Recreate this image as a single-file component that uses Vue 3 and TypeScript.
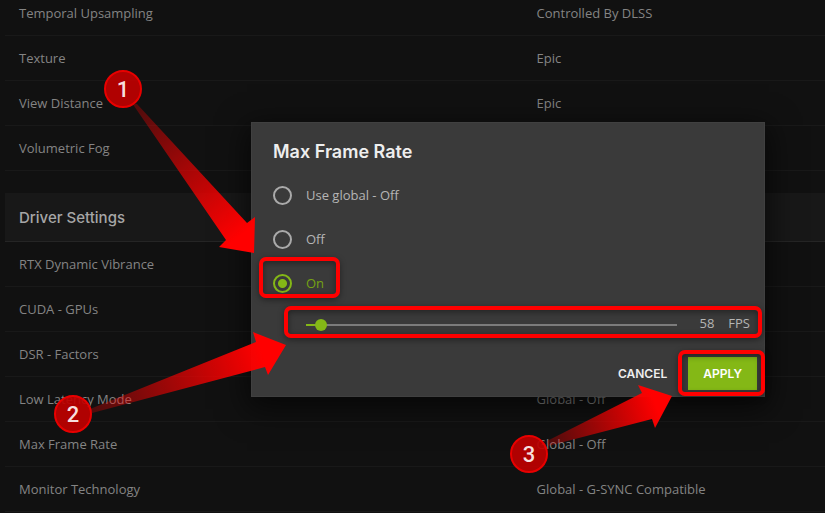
<script setup lang="ts">
import { ref } from 'vue'

interface Setting {
  name: string
  value: string
}

interface Marker {
  step: number
  x: number
  y: number
  arrow: string
  from: [number, number]
  to: [number, number]
}

const gameSettings: Setting[] = [
  { name: 'Temporal Upsampling', value: 'Controlled By DLSS' },
  { name: 'Texture', value: 'Epic' },
  { name: 'View Distance', value: 'Epic' },
  { name: 'Volumetric Fog', value: '' },
]

const driverSettings: Setting[] = [
  { name: 'RTX Dynamic Vibrance', value: '' },
  { name: 'CUDA - GPUs', value: '' },
  { name: 'DSR - Factors', value: '' },
  { name: 'Low Latency Mode', value: 'Global - Off' },
  { name: 'Max Frame Rate', value: 'Global - Off' },
  { name: 'Monitor Technology', value: 'Global - G-SYNC Compatible' },
]

const options = [
  { id: 'global', label: 'Use global - Off' },
  { id: 'off', label: 'Off' },
  { id: 'on', label: 'On' },
]

const markers: Marker[] = [
  {
    step: 1, x: 123, y: 89,
    arrow: '132,103 137,104 247,223 255,217 254,253 219,247 226,240',
    from: [134, 104], to: [240, 236],
  },
  {
    step: 2, x: 73, y: 414,
    arrow: '90,409 256,342 253,332 286,345 268,375 265,367 92,413',
    from: [90, 411], to: [262, 352],
  },
  {
    step: 3, x: 529, y: 454,
    arrow: '547,441 642,393 638,385 672,396 655,428 652,419 548,446',
    from: [547, 443], to: [655, 403],
  },
]

const mode = ref('on')
const fps = ref(58)
const min = 40
const max = 800
</script>

<template>
  <div class="page">
    <main class="settings">
      <table class="list">
        <colgroup><col class="name-col" /><col /></colgroup>
        <tbody>
          <tr v-for="s in gameSettings" :key="s.name">
            <th scope="row">{{ s.name }}</th>
            <td>{{ s.value }}</td>
          </tr>
        </tbody>
      </table>
      <h2 class="section">Driver Settings</h2>
      <table class="list">
        <colgroup><col class="name-col" /><col /></colgroup>
        <tbody>
          <tr v-for="s in driverSettings" :key="s.name">
            <th scope="row">{{ s.name }}</th>
            <td>{{ s.value }}</td>
          </tr>
        </tbody>
      </table>
    </main>

    <div class="overlay">
      <form class="dialog" role="dialog" aria-labelledby="dialog-title" @submit.prevent>
        <h1 id="dialog-title">Max Frame Rate</h1>
        <div class="options">
          <label
            v-for="o in options"
            :key="o.id"
            class="option"
            :class="{ selected: mode === o.id }"
          >
            <input v-model="mode" type="radio" name="mode" :value="o.id" />
            <span>{{ o.label }}</span>
            <i v-if="o.id === 'on'" class="highlight highlight-option"></i>
          </label>
        </div>
        <div class="slider-row">
          <input
            v-model.number="fps"
            class="slider"
            type="range"
            :min="min"
            :max="max"
            aria-label="Frames per second"
            :style="{ '--fill': ((fps - min) / (max - min)) * 100 + '%' }"
          />
          <output class="fps">{{ fps }}</output>
          <span class="unit">FPS</span>
          <i class="highlight highlight-slider"></i>
        </div>
        <div class="actions">
          <button type="button" class="cancel">CANCEL</button>
          <div class="apply-wrap">
            <button type="submit" class="apply">APPLY</button>
            <i class="highlight highlight-apply"></i>
          </div>
        </div>
      </form>
    </div>

    <svg class="markers" aria-hidden="true">
      <defs>
        <linearGradient
          v-for="m in markers"
          :id="'fade' + m.step"
          :key="m.step"
          gradientUnits="userSpaceOnUse"
          :x1="m.from[0]"
          :y1="m.from[1]"
          :x2="m.to[0]"
          :y2="m.to[1]"
        >
          <stop offset="0" stop-color="#f00" stop-opacity="0.25" />
          <stop offset="1" stop-color="#f00" />
        </linearGradient>
      </defs>
      <g v-for="m in markers" :key="m.step">
        <polygon :points="m.arrow" :fill="`url(#fade${m.step})`" />
        <circle :cx="m.x" :cy="m.y" r="18" class="dot" />
        <text :x="m.x" :y="m.y + 8" class="digit">{{ m.step }}</text>
      </g>
    </svg>
  </div>
</template>

<style>
body {
  margin: 0;
  background: #111;
}
</style>

<style scoped>
.page {
  position: relative;
  height: 100vh;
  overflow: hidden;
  background: #111;
  color: #848484;
  font: 13px/20px "Open Sans", "Liberation Sans", sans-serif;
}

.settings {
  margin: -9px 0 0 5px;
}

.list {
  width: 100%;
  border-collapse: separate;
  border-spacing: 0;
  table-layout: fixed;
}

.name-col {
  width: 63%;
}

.list th,
.list td {
  box-sizing: border-box;
  height: 45px;
  padding: 0 14px;
  border-bottom: 1px solid #191919;
  font-weight: 400;
  text-align: left;
}

.list td {
  padding-left: 15px;
}

.section {
  margin: 22px 0 0;
  padding: 15px 14px 13px;
  border-bottom: 1px solid #252525;
  background: #181818;
  color: #a6a6a6;
  font: 500 15px/20px Inter, "Liberation Sans", sans-serif;
}

.overlay {
  position: absolute;
  inset: 0;
  display: flex;
  align-items: flex-start;
  padding: 122px 60px 0 251px;
}

.dialog {
  box-sizing: border-box;
  flex: 1;
  padding: 18px 7px 6px 21px;
  border: 1px solid #404040;
  background: #3a3a3a;
  box-shadow: 0 8px 28px 4px rgba(0, 0, 0, 0.6);
  color: #b5b5b5;
}

.dialog h1 {
  margin: 0;
  color: #eee;
  font: 600 18px/22px Inter, "Liberation Sans", sans-serif;
}

.options {
  display: flex;
  flex-direction: column;
  align-items: flex-start;
  gap: 24px;
  margin-top: 22px;
}

.option {
  position: relative;
  display: flex;
  align-items: center;
  gap: 14px;
}

.option input {
  appearance: none;
  box-sizing: border-box;
  width: 19px;
  height: 19px;
  margin: 0;
  border: 2px solid #aaa;
  border-radius: 50%;
}

.option.selected {
  color: #76a313;
}

.option.selected input {
  border-color: #84b816;
  background: radial-gradient(circle, #84b816 4px, transparent 5px);
}

.slider-row {
  position: relative;
  display: flex;
  align-items: center;
  margin: 20px 7px 0 33px;
}

.slider {
  appearance: none;
  flex: 1;
  min-width: 0;
  height: 12px;
  margin: 3px 0 0;
  background: linear-gradient(#84b816, #84b816) 0 5px / var(--fill) 2px no-repeat,
    linear-gradient(#7c7c7c, #7c7c7c) 0 5px / 100% 2px no-repeat;
}

.slider::-webkit-slider-thumb {
  appearance: none;
  width: 12px;
  height: 12px;
  border-radius: 50%;
  background: #84b816;
}

.fps {
  margin-left: 22px;
}

.unit {
  margin-left: 14px;
}

.actions {
  display: flex;
  justify-content: flex-end;
  align-items: center;
  margin-top: 24px;
}

.actions button {
  height: 33px;
  padding: 0 15px;
  border: 0;
  background: none;
  color: #fff;
  font: 600 12px/20px Inter, "Liberation Sans", sans-serif;
}

.actions .cancel {
  margin-right: 6px;
  color: #eee;
}

.apply-wrap {
  position: relative;
}

.actions .apply {
  display: block;
  background: #84b816;
}

.highlight {
  position: absolute;
  border: 4px solid #f00;
  border-radius: 7px;
  box-shadow: 0 2px 6px rgba(0, 0, 0, 0.4), inset 0 2px 6px rgba(0, 0, 0, 0.4);
  pointer-events: none;
}

.highlight-option {
  inset: -16px -16px -5px -14px;
}

.highlight-slider {
  inset: -7px -12px -5px -22px;
}

.highlight-apply {
  inset: -7px -8px -6px -10px;
}

.markers {
  position: absolute;
  inset: 0;
  width: 100%;
  height: 100%;
  pointer-events: none;
}

.dot {
  fill: rgba(190, 0, 0, 0.92);
  stroke: #e80000;
  stroke-width: 2px;
}

.digit {
  fill: #f6dede;
  font: 500 22px Roboto, sans-serif;
  text-anchor: middle;
}
</style>
